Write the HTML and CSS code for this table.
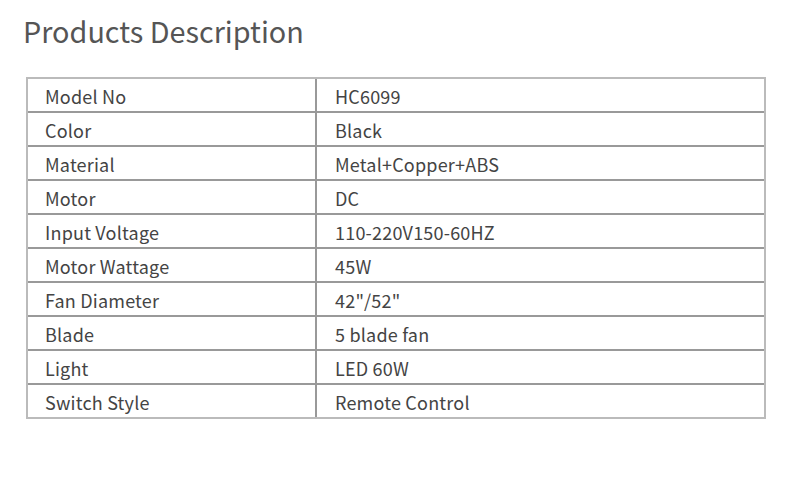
FILE: index.html
```html
<!DOCTYPE html>
<html>
<head>
<meta charset="utf-8">
<link rel="stylesheet" href="styles.css">
</head>
<body>
<div class="page">
  <h1 class="title">Products Description</h1>
  <table class="spec">
    <tr><td>Model No</td><td>HC6099</td></tr>
    <tr><td>Color</td><td>Black</td></tr>
    <tr><td>Material</td><td>Metal+Copper+ABS</td></tr>
    <tr><td>Motor</td><td>DC</td></tr>
    <tr><td>Input Voltage</td><td>110-220V150-60HZ</td></tr>
    <tr><td>Motor Wattage</td><td>45W</td></tr>
    <tr><td>Fan Diameter</td><td>42"/52"</td></tr>
    <tr><td>Blade</td><td>5 blade fan</td></tr>
    <tr><td>Light</td><td>LED 60W</td></tr>
    <tr><td>Switch Style</td><td>Remote Control</td></tr>
  </table>
</div>
</body>
</html>
```
FILE: styles.css
```css
html, body {
  margin: 0;
  padding: 0;
  background: #fff;
}
.page {
  font-family: "Noto Sans CJK SC", "Source Sans Pro", "Noto Sans", sans-serif;
  color: #444;
  padding: 11px 0 0 26px;
}
.title {
  margin: 0 0 26px -3px;
  font-size: 28.8px;
  font-weight: 400;
  line-height: 40px;
  color: #555;
}
.spec {
  border-collapse: separate;
  border-spacing: 0;
  border: 2px solid #bbb;
  width: 740px;
  font-size: 18px;
  letter-spacing: 0.2px;
  color: #444;
}
.spec td {
  height: 30px;
  padding: 2px 0 0 17px;
  border-bottom: 2px solid #999;
  line-height: 30px;
  vertical-align: middle;
}
.spec tr:last-child td {
  border-bottom: none;
}
.spec td:first-child {
  width: 270px;
  border-right: 2px solid #999;
}
.spec td + td {
  padding-left: 18px;
}
```
